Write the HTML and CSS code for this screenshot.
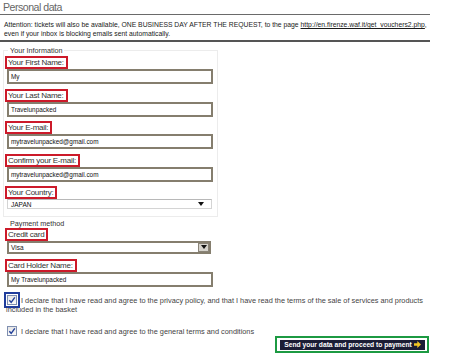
FILE: index.html
```html
<!DOCTYPE html>
<html>
<head>
<meta charset="utf-8">
<title>Personal data</title>
<link rel="stylesheet" href="styles.css">
</head>
<body>
<div class="page">
  <h1 class="title">Personal data</h1>
  <p class="notice">Attention: tickets will also be available, ONE BUSINESS DAY AFTER THE REQUEST, to the page <a href="#">http://en.firenze.waf.it/get_vouchers2.php</a>,<br>even if your inbox is blocking emails sent automatically.</p>

  <fieldset class="box info">
    <legend>Your Information</legend>
    <div class="field"><span class="tag">Your First Name:</span><div class="input">My</div></div>
    <div class="field"><span class="tag">Your Last Name:</span><div class="input">Travelunpacked</div></div>
    <div class="field"><span class="tag">Your E-mail:</span><div class="input">mytravelunpacked@gmail.com</div></div>
    <div class="field"><span class="tag">Confirm your E-mail:</span><div class="input">mytravelunpacked@gmail.com</div></div>
    <div class="field"><span class="tag">Your Country:</span><div class="select light">JAPAN<svg class="tri" width="6" height="4" viewBox="0 0 6 4"><path d="M0 0H6L3 4Z" fill="#111"/></svg></div></div>
  </fieldset>

  <fieldset class="box pay">
    <legend>Payment method</legend>
    <div class="field"><span class="tag">Credit card</span><div class="select dark">Visa<span class="drop"><svg width="6" height="4" viewBox="0 0 6 4"><path d="M0 0H6L3 4Z" fill="#111"/></svg></span></div></div>
    <div class="field"><span class="tag">Card Holder Name:</span><div class="input">My Travelunpacked</div></div>
  </fieldset>

  <p class="agree first"><span class="cb hl"><svg width="8" height="8" viewBox="0 0 8 8"><path d="M1.3 4.2L3.2 6.3L6.8 1.4" fill="none" stroke="#22409a" stroke-width="1.4"/></svg></span>I declare that I have read and agree to the privacy policy, and that I have read the terms of the sale of services and products included in the basket</p>
  <p class="agree second"><span class="cb"><svg width="8" height="8" viewBox="0 0 8 8"><path d="M1.3 4.2L3.2 6.3L6.8 1.4" fill="none" stroke="#22409a" stroke-width="1.4"/></svg></span>I declare that I have read and agree to the general terms and conditions</p>

  <div class="actions">
    <span class="go"><button class="send" type="button">Send your data and proceed to payment<svg width="7" height="7" viewBox="0 0 7 7"><path d="M0 2.3H3.3V0L7 3.5L3.3 7V4.7H0Z" fill="#f3c623"/></svg></button></span>
  </div>
</div>
</body>
</html>
```

FILE: styles.css
```css
* { box-sizing: border-box; }

body {
  margin: 0;
  background: #fff;
  font-family: "Liberation Sans", Arial, sans-serif;
  color: #333;
}

.page {
  width: 430px;
}

.title {
  margin: 0;
  height: 15px;
  padding: 1px 0 0 3px;
  font-size: 10.6px;
  line-height: 12px;
  font-weight: normal;
  letter-spacing: -0.5px;
  color: #666;
  border-bottom: 1px solid #6a6a6a;
}

.notice {
  margin: 0;
  padding: 5px 0 2px 4px;
  font-size: 6.8px;
  line-height: 9px;
  white-space: nowrap;
  color: #1a1a1a;
  border-bottom: 2px solid #555;
}

.notice a {
  color: #1a1a1a;
}

.box {
  margin: 0 0 0 3px;
  width: 215px;
  min-width: 0;
}

.info {
  margin-top: 4px;
  padding: 1px 4px 7px 1px;
  border: 1px solid #ececec;
}

.pay {
  margin-top: 1.5px;
  padding: 0 4px 0 1px;
  border: 1px solid transparent;
}

legend {
  margin-left: 3px;
  padding: 0 2px;
  font-size: 7.2px;
  line-height: 9px;
  color: #333;
}

.field {
  display: flex;
  flex-direction: column;
  align-items: flex-start;
}

.field + .field {
  margin-top: 4.5px;
}

.pay .field + .field {
  margin-top: 5px;
}

.tag {
  height: 13px;
  padding: 0 2px 0 1px;
  border: 2px solid #cc1a2a;
  font-size: 8px;
  line-height: 9px;
  letter-spacing: -0.25px;
  color: #333;
}

.input {
  margin-left: 2px;
  width: 206px;
  height: 15px;
  padding-left: 2px;
  border: 2px solid #857e6e;
  font-size: 6.4px;
  line-height: 11px;
  color: #111;
}

.select {
  margin-left: 2px;
  display: flex;
  align-items: center;
  justify-content: space-between;
  font-size: 6.5px;
  color: #111;
}

.select.light {
  width: 205px;
  height: 10px;
  padding: 0 7px 0 3px;
  border: 1px solid #d4d4d4;
  border-top-color: #b8b8b8;
}

.select.dark {
  width: 204px;
  height: 13px;
  padding: 0 0 0 2px;
  border: 2px solid #857e6e;
}

.drop {
  width: 11px;
  height: 9px;
  display: flex;
  align-items: center;
  justify-content: center;
  background: #d6d3cc;
  border: 1px solid #8a8478;
}

.agree {
  margin: 0;
  padding-left: 6px;
  font-size: 7.35px;
  line-height: 10px;
  color: #444;
}

.agree.first {
  margin-top: 7px;
}

.agree.second {
  margin-top: 11px;
}

.cb {
  display: inline-block;
  width: 10px;
  height: 10px;
  margin: 0 4px 0 1px;
  vertical-align: -2.5px;
  border: 1px solid #7f8fb0;
  background: linear-gradient(#e6e6e6, #fafafa);
}

.cb svg {
  display: block;
}

.cb.hl {
  outline: 2px solid #1f3c9c;
  outline-offset: 1px;
}

.actions {
  display: flex;
  justify-content: flex-end;
  margin-top: -1px;
  padding-right: 1px;
}

.go {
  display: block;
  width: 154px;
  padding: 2px 2px 1px 3px;
  border: 2px solid #1c9a42;
}

.send {
  display: flex;
  align-items: center;
  justify-content: center;
  gap: 2px;
  width: 145px;
  height: 10px;
  margin: 0;
  padding: 0 1px;
  border: 0;
  background: #1b1d35;
  color: #fff;
  font-family: "Liberation Sans", Arial, sans-serif;
  font-weight: bold;
  font-size: 6.7px;
  line-height: 10px;
  white-space: nowrap;
}
```
